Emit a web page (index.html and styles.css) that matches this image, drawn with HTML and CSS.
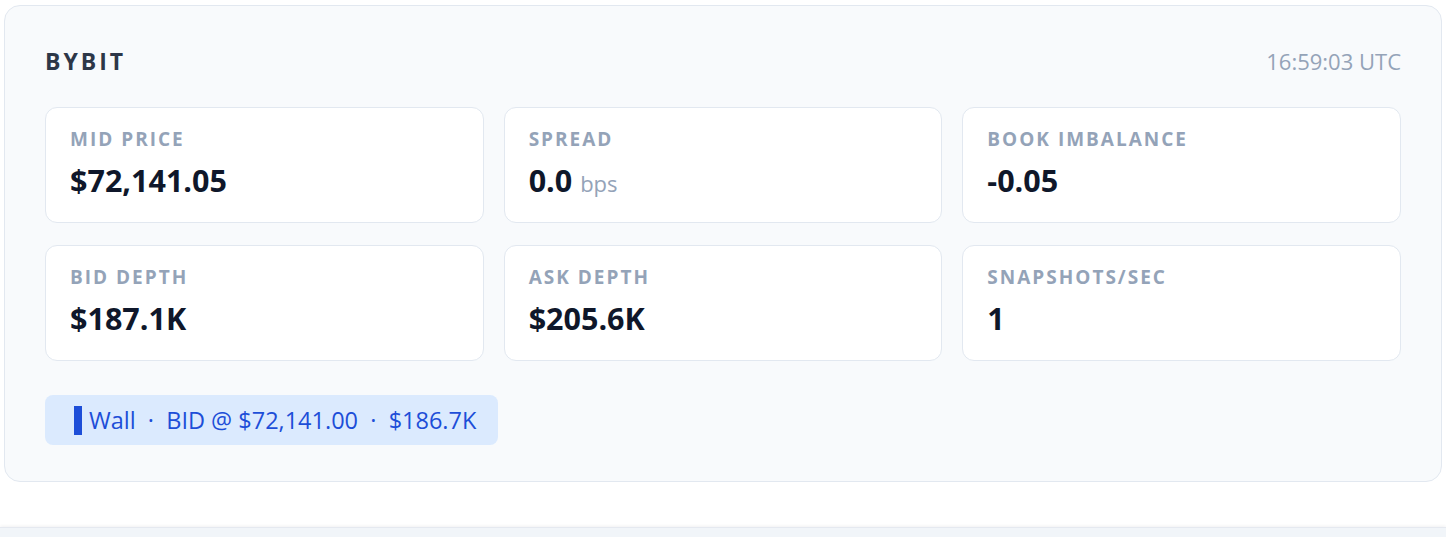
FILE: index.html
```html
<html>
<head>
<title>Bybit order book</title>
<link rel="stylesheet" href="styles.css">
</head>
<body>

<div id="page">
<div class="venue">
  <div class="venue-head">
    <span class="venue-name">BYBIT</span>
    <span class="venue-time">16:59:03 UTC</span>
  </div>

  <div class="stats">
    <div class="stat">
      <div class="stat-label">MID PRICE</div>
      <div class="stat-value">$72,141.05</div>
    </div>
    <div class="stat">
      <div class="stat-label">SPREAD</div>
      <div class="stat-value">0.0 <span class="unit">bps</span></div>
    </div>
    <div class="stat">
      <div class="stat-label">BOOK IMBALANCE</div>
      <div class="stat-value">-0.05</div>
    </div>
    <div class="stat">
      <div class="stat-label">BID DEPTH</div>
      <div class="stat-value">$187.1K</div>
    </div>
    <div class="stat">
      <div class="stat-label">ASK DEPTH</div>
      <div class="stat-value">$205.6K</div>
    </div>
    <div class="stat">
      <div class="stat-label">SNAPSHOTS/SEC</div>
      <div class="stat-value">1</div>
    </div>
  </div>

  <div class="walls">
    <span class="wall"><span class="wall-bar"></span>Wall &nbsp;·&nbsp; BID @ $72,141.00 &nbsp;·&nbsp; $186.7K</span>
  </div>
</div>
</div> <!-- End of "page" -->

<div class="next-panel"></div>

</body>
</html>
```

FILE: styles.css
```css
body {
  margin: 0;
  background-color: #ffffff;
  font-family: "Open Sans", "Noto Sans", sans-serif;
}
div#page {
  padding: 5px 4px 0 4px;
}
div.venue {
  background-color: #f8fafc;
  border: 1px solid #e2e8f0;
  border-radius: 16px;
  padding: 37px 40px 36px 40px;
}
div.venue-head {
  display: flex;
  justify-content: space-between;
  align-items: center;
  height: 36px;
}
span.venue-name {
  color: #2d3748;
  font-size: 23px;
  font-weight: 700;
  letter-spacing: 3px;
}
span.venue-time {
  color: #94a3b8;
  font-size: 22px;
}
div.stats {
  display: grid;
  grid-template-columns: 1fr 1fr 1fr;
  gap: 22px 20px;
  margin-top: 28px;
}
div.stat {
  background-color: #ffffff;
  border: 1px solid #e2e8f0;
  border-radius: 12px;
  height: 116px;
  box-sizing: border-box;
  padding: 17px 24px;
}
div.stat-label {
  color: #94a3b8;
  font-size: 19px;
  font-weight: 700;
  letter-spacing: 2px;
  line-height: 28px;
}
div.stat-value {
  color: #0f172a;
  font-size: 30.5px;
  font-weight: 700;
  line-height: 42px;
  margin-top: 6px;
}
span.unit {
  color: #94a3b8;
  font-size: 22px;
  font-weight: 400;
}
div.walls {
  margin-top: 34px;
}
span.wall {
  display: inline-flex;
  align-items: center;
  height: 50px;
  padding: 0 22px 0 29px;
  background-color: #dbeafe;
  border-radius: 8px;
  color: #1d4ed8;
  font-size: 23.5px;
  font-weight: 500;
  white-space: pre;
}
span.wall-bar {
  display: inline-block;
  width: 8px;
  height: 29px;
  margin-right: 7px;
  background-color: #1d4ed8;
}
div.next-panel {
  margin-top: 45px;
  height: 40px;
  background-color: #f1f5f9;
  border-top: 1px solid #e5e9f0;
  box-shadow: 0 -1px 3px rgba(15, 23, 42, 0.06);
}
```
